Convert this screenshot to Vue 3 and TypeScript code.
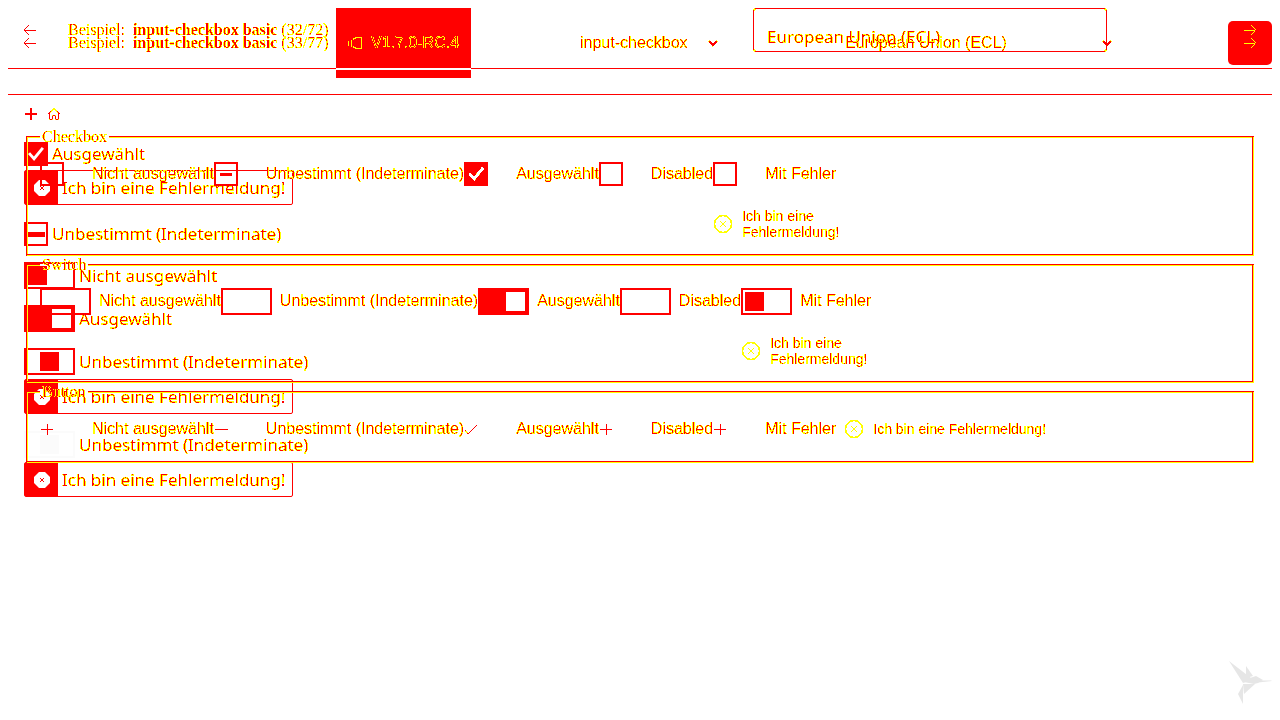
<script setup lang="ts">
type State = 'off' | 'mixed' | 'on'
interface Choice { label: string; state: State; error?: boolean }
interface Group { legend: string; kind: 'checkbox' | 'switch' | 'button' }

const groups: Group[] = [
  { legend: 'Checkbox', kind: 'checkbox' },
  { legend: 'Switch', kind: 'switch' },
  { legend: 'Button', kind: 'button' },
]
const choices: Choice[] = [
  { label: 'Nicht ausgewählt', state: 'off' },
  { label: 'Unbestimmt (Indeterminate)', state: 'mixed' },
  { label: 'Ausgewählt', state: 'on' },
  { label: 'Disabled', state: 'off' },
  { label: 'Mit Fehler', state: 'off', error: true },
]
const message = 'Ich bin eine Fehlermeldung!'

interface Row { kind: 'check' | 'toggle' | 'alert'; state?: string; label: string; gap: string }
const rows: Row[] = [
  { kind: 'check', state: 'on', label: 'Ausgewählt', gap: 'g16' },
  { kind: 'alert', label: message, gap: 'g4' },
  { kind: 'check', state: 'mixed', label: 'Unbestimmt (Indeterminate)', gap: 'g17' },
  { kind: 'toggle', state: 'knob-left', label: 'Nicht ausgewählt', gap: 'g16' },
  { kind: 'toggle', state: 'on', label: 'Ausgewählt', gap: 'g16' },
  { kind: 'toggle', state: 'mixed', label: 'Unbestimmt (Indeterminate)', gap: 'g16' },
  { kind: 'alert', label: message, gap: 'g4' },
  { kind: 'toggle', state: 'mixed faint', label: 'Unbestimmt (Indeterminate)', gap: 'g17' },
  { kind: 'alert', label: message, gap: 'g4' },
]

function switchState(c: Choice): string {
  if (c.error) return 'knob-left'
  return c.state === 'on' ? 'on' : 'off'
}
const glyphs: Record<State, string> = {
  off: 'M1 7.5h12M7.5 2v11',
  mixed: 'M1 7.5h13',
  on: 'M1 8l3 4L13 3',
}
</script>

<template>
  <svg class="defs" width="0" height="0" aria-hidden="true">
    <filter id="ink" x="-5%" y="-5%" width="110%" height="110%" color-interpolation-filters="sRGB">
      <feColorMatrix type="matrix" values="0 0 0 0 1  1 0 1 -4 4  0 0 1 0 0  0 0 0 1 0" />
      <feComponentTransfer>
        <feFuncG type="discrete" tableValues="0 0 0 0 0 0 0 0 0 0 0 0 0 0 0 0 0 1 1 1" />
        <feFuncB type="discrete" tableValues="0 1" />
        <feFuncA type="discrete" tableValues="0 1 1 1 1 1 1 1" />
      </feComponentTransfer>
    </filter>
  </svg>

  <div class="page">
    <header class="bar tall">
      <button class="nav" aria-label="Zurück">
        <svg class="ink" width="14" height="12" viewBox="0 0 14 12"><path d="M6 1L1 6l5 5M1 6.5h12" /></svg>
      </button>
      <p class="title ink">Beispiel: <b>input-checkbox basic</b> (33/77)</p>
      <div class="badge">
        <svg class="ink light" width="16" height="14" viewBox="0 0 16 14"><path d="M1.5 5v5M4.5 4v7M6 3.500l3-2h5.500v11H9l-3-2" /></svg>
        <span class="ink">V1.7.0-RC.4</span>
      </div>
      <div class="pick component">
        <select class="ink" aria-label="Komponente"><option>input-checkbox</option></select>
        <svg class="ink chevron" width="10" height="8" viewBox="0 0 10 8"><path d="M1 2l4 4 4-4" /></svg>
      </div>
      <div class="pick theme">
        <select class="ink" aria-label="Theme"><option>European Union (ECL)</option></select>
        <svg class="ink chevron" width="10" height="8" viewBox="0 0 10 8"><path d="M1 2l4 4 4-4" /></svg>
      </div>
      <button class="nav next" aria-label="Weiter">
        <svg class="ink light" width="14" height="12" viewBox="0 0 14 12"><path d="M8 1l5 5-5 5M13 6.500H1" /></svg>
      </button>
    </header>

    <header class="bar">
      <button class="nav" aria-label="Vorheriges Beispiel">
        <svg class="ink" width="14" height="12" viewBox="0 0 14 12"><path d="M6 1L1 6l5 5M1 6.5h12" /></svg>
      </button>
      <p class="title ink">Beispiel: <b>input-checkbox basic</b> (32/72)</p>
      <select class="boxed ink" aria-label="Theme auswählen"><option>European Union (ECL)</option></select>
      <button class="nav" aria-label="Nächstes Beispiel">
        <svg class="ink light" width="14" height="12" viewBox="0 0 14 12"><path d="M8 1l5 5-5 5M13 6.500H1" /></svg>
      </button>
    </header>

    <main class="body list">
      <nav class="crumbs">
        <svg class="ink" width="14" height="14" viewBox="0 0 14 14"><path class="bold" d="M1 7h12M7 1v12" /></svg>
        <a href="#" aria-label="Startseite">
          <svg class="ink" width="14" height="14" viewBox="0 0 14 14"><path d="M1 7l6-5.500L13 7M2.500 6v6.500h3V8.500h3v4h3V6" /></svg>
        </a>
      </nav>
      <template v-for="(r, i) in rows" :key="i">
        <div v-if="r.kind === 'alert'" class="alert" :class="r.gap">
          <span class="mark">
            <svg width="18" height="18" viewBox="0 0 18 18"><path class="disc" d="M6 1h6l5 5v6l-5 5H6l-5-5V6z" /><path class="cross" d="M7 7l4 4M11 7l-4 4" /></svg>
          </span>
          <span class="ink">{{ r.label }}</span>
        </div>
        <label v-else class="line" :class="r.gap">
          <input type="checkbox" :class="[r.kind, r.state]" :checked="r.state === 'on'" />
          <span class="ink">{{ r.label }}</span>
        </label>
      </template>
    </main>

    <section class="body forms">
      <fieldset v-for="g in groups" :key="g.kind" :class="g.kind">
        <legend>{{ g.legend }}</legend>
        <div class="cells">
          <div v-for="c in choices" :key="c.label" class="cell">
            <label>
              <input v-if="g.kind === 'checkbox'" type="checkbox" class="check" :class="c.state" :checked="c.state === 'on'" />
              <input v-else-if="g.kind === 'switch'" type="checkbox" class="toggle" :class="switchState(c)" :checked="c.state === 'on'" />
              <template v-else>
                <input type="checkbox" class="unseen" :checked="c.state === 'on'" />
                <svg class="glyph" width="24" height="15" viewBox="0 0 24 15"><path :d="glyphs[c.state]" /></svg>
              </template>
              <span>{{ c.label }}</span>
            </label>
            <div v-if="c.error" class="error">
              <svg class="light" width="20" height="20" viewBox="0 0 20 20"><circle cx="10" cy="10" r="8.500" /><path d="M7 7l6 6M13 7l-6 6" /></svg>
              <span>{{ message }}</span>
            </div>
          </div>
        </div>
      </fieldset>
    </section>
  </div>

  <svg class="bird" width="44" height="44" viewBox="0 0 44 44" aria-hidden="true">
    <path d="M1 1L23 18l-5 4-3 1z" />
    <path d="M18 6l7 10-7 2z" />
    <path d="M16 22l6-4 6-2 7 4-5 3-4 1z" />
    <path d="M33 20.500h10l1 .500-14 1.500z" />
    <path d="M15 24h12L16 34z" />
    <path d="M15 25v19L10 34z" />
  </svg>
</template>

<style>
body {
  background: #fff;
}
</style>

<style scoped>
.defs {
  position: absolute;
}
.page {
  display: grid;
  grid-template-columns: minmax(0, 1fr);
  padding: 8px;
  font: 16px/20px "Liberation Sans", Arial, sans-serif;
  color: #000;
}
.ink {
  filter: url(#ink);
}
svg {
  flex: none;
  fill: none;
  stroke: #000;
  stroke-width: 1;
}
.light {
  stroke-opacity: 0.7;
}
.chevron {
  stroke-width: 2;
}
.bar {
  grid-area: 1 / 1;
  align-self: start;
  display: flex;
  align-items: center;
  height: 44px;
  padding-bottom: 16px;
  border-bottom: 1px solid #f00;
}
.bar.tall {
  height: 70px;
}
.nav {
  flex: none;
  display: grid;
  place-items: center;
  width: 44px;
  height: 44px;
  padding: 0;
  border: 0;
  border-radius: 5px;
  background: none;
}
.nav.next {
  margin-left: auto;
  background: #f00;
}
.title {
  flex: none;
  width: 268px;
  margin: 0 0 0 16px;
  box-sizing: border-box;
  font-family: "Liberation Serif", "Times New Roman", serif;
  white-space: nowrap;
}
.title b {
  margin-left: 4px;
}
.badge {
  position: relative;
  z-index: 1;
  flex: none;
  display: flex;
  align-items: center;
  gap: 8px;
  box-sizing: border-box;
  width: 135px;
  height: 70px;
  padding-left: 11px;
  background: linear-gradient(#f00 0 60px, #fff 60px 62px, #f00 62px);
}
.pick {
  display: flex;
  align-items: center;
}
.pick select {
  flex: 1;
  min-width: 0;
}
.component {
  flex: 0 1 138px;
  margin-left: 109px;
}
.theme {
  flex: 0 1 267px;
  margin-left: 127px;
}
select {
  appearance: none;
  padding: 0;
  border: 0;
  background: none;
  font: inherit;
  color: #000;
}
.boxed {
  flex: 0 1 354px;
  height: 44px;
  margin-left: auto;
  margin-right: 121px;
  padding: 14px 12px 0 13px;
  box-sizing: border-box;
  border: 1px solid #000;
  border-radius: 3px;
  font: 17px/24px "Noto Sans", sans-serif;
}
.body {
  grid-area: 2 / 1;
  padding: 0 16px;
}
.list {
  display: flex;
  flex-direction: column;
  align-items: flex-start;
  font: 17px/24px "Noto Sans", sans-serif;
}
.crumbs {
  display: flex;
  gap: 9px;
  height: 14px;
  margin-top: 12px;
  margin-bottom: 5px;
}
.crumbs a {
  display: flex;
}
.bold {
  stroke-width: 2;
}
.line {
  display: flex;
  align-items: center;
  gap: 4px;
}
.g4 {
  margin-top: 4px;
}
.g16 {
  margin-top: 16px;
}
.g17 {
  margin-top: 17px;
}
.list .check,
.list .toggle {
  --c: #f00;
}
.alert {
  display: flex;
  align-items: center;
  gap: 4px;
  box-sizing: border-box;
  height: 35px;
  padding-right: 7px;
  border: 1px solid #f00;
  border-radius: 2px;
  white-space: nowrap;
}
.mark {
  display: grid;
  place-items: center;
  width: 33px;
  height: 33px;
  background: #f00;
}
.disc {
  fill: #fff;
  stroke: none;
}
.cross {
  stroke: #f00;
}
.check,
.toggle {
  --c: #000;
  appearance: none;
  flex: none;
  display: grid;
  place-items: center;
  box-sizing: border-box;
  margin: 0;
  border: 2px solid var(--c);
}
.check {
  width: 24px;
  height: 24px;
}
.toggle {
  width: 51px;
  height: 27px;
  padding: 0 2px;
}
.check.on,
.toggle.on {
  background: var(--c);
}
.check.on::after {
  content: "";
  width: 16px;
  height: 14px;
  background: #fff;
  clip-path: polygon(0 50%, 13% 38%, 37% 68%, 86% 0, 100% 12%, 38% 100%);
}
.check.mixed::after {
  content: "";
  width: 12px;
  height: 3px;
  background: var(--c);
}
.list .check.mixed::after {
  width: 18px;
  height: 5px;
}
.toggle::after {
  width: 19px;
  height: 19px;
  background: var(--c);
}
.toggle.on::after {
  content: "";
  justify-self: end;
  background: #fff;
}
.toggle.knob-left::after {
  content: "";
  justify-self: start;
}
.toggle.mixed::after {
  content: "";
}
.list .toggle.faint {
  --c: #fbfbfb;
}
.forms {
  padding-top: 33px;
}
fieldset {
  min-width: 0;
  margin: 0 2px;
  padding: 6px 12px 10px;
  border: 2px groove #f00;
  filter: url(#ink);
}
fieldset.switch {
  padding-top: 5px;
}
legend {
  padding: 0 2px;
  font: 16px/18px "Liberation Serif", "Times New Roman", serif;
}
.cells {
  display: flex;
  align-items: flex-start;
  min-height: 92px;
}
.button .cells {
  min-height: 44px;
}
.cell label {
  display: flex;
  align-items: center;
  gap: 28px;
  height: 44px;
  white-space: nowrap;
}
.switch .cell label {
  gap: 8px;
}
.error {
  display: flex;
  align-items: center;
  gap: 9px;
  width: 0;
  min-width: 100%;
  height: 32px;
  margin-top: 12px;
  font-size: 14px;
  line-height: 16px;
}
.button .cell {
  display: flex;
  align-items: center;
}
.button .error {
  width: auto;
  min-width: 0;
  margin: 0 0 0 8px;
  white-space: nowrap;
}
.unseen {
  position: absolute;
  opacity: 0;
}
.bird {
  position: fixed;
  right: 8px;
  bottom: 16px;
  fill: #e6e6e6;
  stroke: none;
}
</style>
